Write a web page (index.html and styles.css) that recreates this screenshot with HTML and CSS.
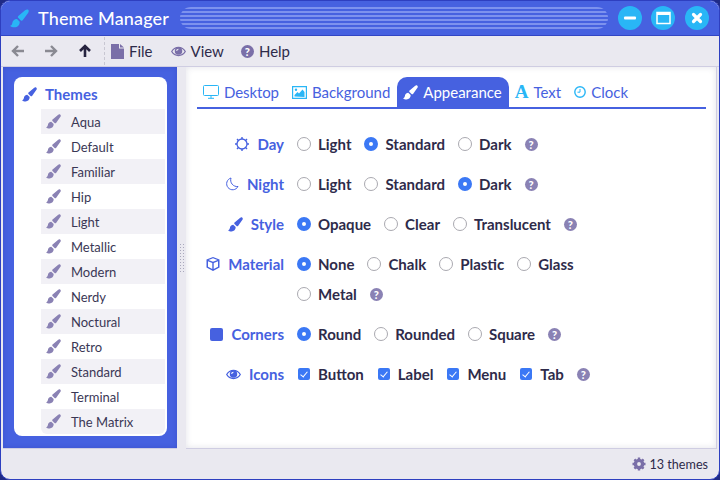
FILE: index.html
```html
<!DOCTYPE html>
<html lang="en">
<head>
    <meta charset="UTF-8">
    <title>Theme Manager</title>
    <link rel="stylesheet" href="styles.css">
</head>
<body>
    <svg class="defs" width="0" height="0">
        <symbol id="brush" viewBox="0 0 16 16"><path d="M15.300.7c.8.7.5 1.700-.1 2.600L10.700 9.500C10.200 10 9.600 10 9.100 9.600L6.900 7.400C6.500 6.900 6.500 6.400 7 5.900L12.700 1.100c1-.8 1.900-1 2.600-.4z"/><path d="M5.900 8.400L8.200 10.700C8.300 13.500 6.300 15.400 3.800 15.400 2.200 15.400.8 14.800 0 14 1.200 13.800 1.700 13 1.900 11.900 2.200 9.800 3.800 8.300 5.900 8.400z"/></symbol>
        <symbol id="eye" viewBox="0 0 16 16"><path fill-rule="evenodd" d="M0 8c1.700-3 4.700-5 8-5s6.300 2 8 5c-1.700 3-4.700 5-8 5S1.700 11 0 8zm1.500 0C3 10.300 5.400 11.800 8 11.800s5-1.500 6.500-3.800C13.600 6.600 12.400 5.500 11 4.900c.6.700 1 1.600 1 2.600a4 4 0 0 1-8 0c0-1 .4-1.900 1-2.600C3.600 5.500 2.400 6.600 1.500 8zM8 5a2.500 2.500 0 0 0-2.500 2.500h1.200C6.700 6.800 7.300 6.200 8 6.200z"/></symbol>
    </svg>

    <div class="window">
        <div class="titlebar">
            <svg class="title-icon"><use href="#brush"/></svg>
            <span class="title">Theme Manager</span>
            <div class="stripes"></div>
            <div class="winbtn">
                <svg viewBox="0 0 24 24"><rect x="6" y="10.500" width="12" height="3" rx="1" fill="#fff"/></svg>
            </div>
            <div class="winbtn">
                <svg viewBox="0 0 24 24"><rect x="6" y="6.500" width="13" height="11" fill="none" stroke="#fff" stroke-width="1.500"/><rect x="6" y="6.500" width="13" height="2.500" fill="#fff"/></svg>
            </div>
            <div class="winbtn">
                <svg viewBox="0 0 24 24"><path d="M8.500 8.500l7 7M15.500 8.500l-7 7" stroke="#fff" stroke-width="3.200" stroke-linecap="round"/></svg>
            </div>
        </div>

        <div class="toolbar">
            <svg class="arrow arrow-off" viewBox="0 0 14 14"><path d="M7 2L2 7l5 5M2.500 7H13" fill="none" stroke="currentColor" stroke-width="2.400"/></svg>
            <svg class="arrow arrow-off" viewBox="0 0 14 14"><path d="M7 2l5 5-5 5M11.500 7H1" fill="none" stroke="currentColor" stroke-width="2.400"/></svg>
            <svg class="arrow arrow-on" viewBox="0 0 14 14"><path d="M2 7l5-5 5 5M7 2.500V13" fill="none" stroke="currentColor" stroke-width="2.600"/></svg>
            <div class="tool-sep"></div>
            <div class="tool tool-file">
                <svg width="13" height="16" viewBox="0 0 13 16"><path d="M0 1h8v4.500h5V16H0zM9 1l4 3.500H9z"/></svg>
                <span>File</span>
            </div>
            <div class="tool tool-view">
                <svg width="15" height="15"><use href="#eye"/></svg>
                <span>View</span>
            </div>
            <div class="tool">
                <span class="help help-tool">?</span>
                <span>Help</span>
            </div>
        </div>

        <div class="main">
            <div class="side">
                <div class="side-card">
                    <div class="side-head">
                        <svg width="15" height="15"><use href="#brush"/></svg>
                        <span>Themes</span>
                    </div>
                    <ul class="theme-list">
                        <li><svg width="15" height="15"><use href="#brush"/></svg>Aqua</li>
                        <li><svg width="15" height="15"><use href="#brush"/></svg>Default</li>
                        <li><svg width="15" height="15"><use href="#brush"/></svg>Familiar</li>
                        <li><svg width="15" height="15"><use href="#brush"/></svg>Hip</li>
                        <li><svg width="15" height="15"><use href="#brush"/></svg>Light</li>
                        <li><svg width="15" height="15"><use href="#brush"/></svg>Metallic</li>
                        <li><svg width="15" height="15"><use href="#brush"/></svg>Modern</li>
                        <li><svg width="15" height="15"><use href="#brush"/></svg>Nerdy</li>
                        <li><svg width="15" height="15"><use href="#brush"/></svg>Noctural</li>
                        <li><svg width="15" height="15"><use href="#brush"/></svg>Retro</li>
                        <li><svg width="15" height="15"><use href="#brush"/></svg>Standard</li>
                        <li><svg width="15" height="15"><use href="#brush"/></svg>Terminal</li>
                        <li><svg width="15" height="15"><use href="#brush"/></svg>The Matrix</li>
                    </ul>
                </div>
            </div>
            <div class="splitter"><div class="grip"></div></div>
            <div class="content">
                <div class="tabs">
                    <div class="tab tab-first">
                        <svg width="16" height="14" viewBox="0 0 16 14"><path d="M1.500.500h13a1 1 0 0 1 1 1v8a1 1 0 0 1-1 1h-13a1 1 0 0 1-1-1v-8a1 1 0 0 1 1-1zM5 13.300h6M8 10.500v2.800" fill="none" stroke="#29b6f6"/></svg>
                        <span>Desktop</span>
                    </div>
                    <div class="tab">
                        <svg width="15" height="13" viewBox="0 0 15 13"><path fill-rule="evenodd" fill="#29b6f6" d="M0 0h15v13H0zm1.200 1.200v10.600h12.600V1.200z"/><path fill="#29b6f6" d="M2.500 10.500V9l3-3 1.500 1.500 3.500-4 2 2.500v5z"/><circle cx="4" cy="3.800" r="1.200" fill="#29b6f6"/></svg>
                        <span>Background</span>
                    </div>
                    <div class="tab tab-active">
                        <svg width="15" height="15"><use href="#brush"/></svg>
                        <span>Appearance</span>
                    </div>
                    <div class="tab">
                        <span class="tab-a">A</span>
                        <span>Text</span>
                    </div>
                    <div class="tab">
                        <svg width="12" height="12" viewBox="0 0 12 12"><circle cx="6" cy="6" r="5.200" fill="none" stroke="#29b6f6" stroke-width="1.400"/><path d="M6 3v3.200H3.500" fill="none" stroke="#29b6f6"/></svg>
                        <span>Clock</span>
                    </div>
                </div>

                <div class="form">
                    <div class="lbl">
                        <svg width="14" height="14" viewBox="0 0 14 14"><circle cx="7" cy="7" r="5" fill="none" stroke="currentColor" stroke-width="1.300"/><path d="M7 0v2M7 12v2M0 7h2M12 7h2M2 2l1.400 1.400M10.600 10.600L12 12M12 2l-1.400 1.400M3.400 10.600L2 12" stroke="currentColor" stroke-width="1.400"/></svg>
                        <span>Day</span>
                    </div>
                    <div class="opts">
                        <span class="opt"><i class="radio"></i>Light</span>
                        <span class="opt"><i class="radio on"></i>Standard</span>
                        <span class="opt"><i class="radio"></i>Dark</span>
                        <span class="help">?</span>
                    </div>

                    <div class="lbl">
                        <svg width="14" height="14" viewBox="0 0 14 14"><path d="M6 1a6 6 0 1 0 7 8.500A6.500 6.500 0 0 1 6 1z" fill="none" stroke="currentColor"/></svg>
                        <span>Night</span>
                    </div>
                    <div class="opts">
                        <span class="opt"><i class="radio"></i>Light</span>
                        <span class="opt"><i class="radio"></i>Standard</span>
                        <span class="opt"><i class="radio on"></i>Dark</span>
                        <span class="help">?</span>
                    </div>

                    <div class="lbl">
                        <svg width="15" height="15"><use href="#brush"/></svg>
                        <span>Style</span>
                    </div>
                    <div class="opts">
                        <span class="opt"><i class="radio on"></i>Opaque</span>
                        <span class="opt"><i class="radio"></i>Clear</span>
                        <span class="opt"><i class="radio"></i>Translucent</span>
                        <span class="help">?</span>
                    </div>

                    <div class="lbl">
                        <svg width="14" height="14" viewBox="0 0 14 14"><path fill-rule="evenodd" d="M7 0l6.500 2.500v8L7 14 .5 10.500v-8zM2.500 3L7 4.800 11.500 3 7 1.300zM2 4.200v5.500l4.300 2.300V6zm5.700 1.800v6L12 9.700V4.200z"/></svg>
                        <span>Material</span>
                    </div>
                    <div class="opts">
                        <span class="opt"><i class="radio on"></i>None</span>
                        <span class="opt"><i class="radio"></i>Chalk</span>
                        <span class="opt"><i class="radio"></i>Plastic</span>
                        <span class="opt"><i class="radio"></i>Glass</span>
                        <span class="opt"><i class="radio"></i>Metal</span>
                        <span class="help">?</span>
                    </div>

                    <div class="lbl">
                        <span class="square"></span>
                        <span>Corners</span>
                    </div>
                    <div class="opts">
                        <span class="opt"><i class="radio on"></i>Round</span>
                        <span class="opt"><i class="radio"></i>Rounded</span>
                        <span class="opt"><i class="radio"></i>Square</span>
                        <span class="help">?</span>
                    </div>

                    <div class="lbl">
                        <svg width="15" height="15"><use href="#eye"/></svg>
                        <span>Icons</span>
                    </div>
                    <div class="opts">
                        <span class="opt"><i class="check"></i>Button</span>
                        <span class="opt"><i class="check"></i>Label</span>
                        <span class="opt"><i class="check"></i>Menu</span>
                        <span class="opt"><i class="check"></i>Tab</span>
                        <span class="help">?</span>
                    </div>
                </div>
            </div>
        </div>

        <div class="statusbar">
            <svg width="14" height="14" viewBox="0 0 14 14"><circle cx="7" cy="7" r="3.600" fill="none" stroke="#7a6fa8" stroke-width="3.400"/><path d="M7 .5v13M.5 7h13M2.400 2.400l9.200 9.200M11.600 2.400l-9.200 9.200" stroke="#7a6fa8" stroke-width="2.400" stroke-dasharray="2.600 7.800"/></svg>
            <span>13 themes</span>
        </div>
    </div>
</body>
</html>
```

FILE: styles.css
```css
html, body {
    margin: 0;
    height: 100%;
    background: #1f2a86;
}
body {
    font-family: "Lato", sans-serif;
    color: #2e2b4a;
}
.defs {
    display: block;
    height: 0;
}
.window {
    box-sizing: border-box;
    width: 720px;
    height: 480px;
    display: flex;
    flex-direction: column;
    background: #eae9f0;
    border: 1px solid #2e3fc0;
    border-radius: 10px;
    overflow: hidden;
}

/* title bar */
.titlebar {
    height: 34px;
    flex: none;
    display: flex;
    align-items: center;
    padding-left: 9px;
    background: #4661e0;
    border-bottom: 1px solid #3246c4;
}
.title-icon {
    width: 19px;
    height: 19px;
    fill: #29b6f6;
}
.title {
    margin-left: 9px;
    font-size: 18px;
    letter-spacing: 0.15px;
    font-weight: 500;
    color: #fff;
    width: 142px;
    white-space: nowrap;
}
.stripes {
    width: 428px;
    height: 22px;
    border-radius: 11px;
    background: repeating-linear-gradient(#7d92ee 0 2px, #4661e0 2px 4px);
}
.winbtn {
    width: 24px;
    height: 24px;
    margin-left: 9px;
    border-radius: 50%;
    background: #29b6f6;
}
.stripes + .winbtn,
.winbtn + .winbtn + .winbtn {
    margin-left: 10px;
}
.winbtn svg {
    display: block;
}

/* toolbar */
.toolbar {
    height: 30px;
    flex: none;
    display: flex;
    align-items: center;
    font-size: 15px;
    border-bottom: 1px solid #cfcde2;
    padding-left: 10px;
}
.arrow {
    width: 14px;
    height: 14px;
    margin-right: 19px;
}
.arrow-off {
    color: #8a8a92;
}
.arrow-on {
    color: #26233f;
    margin: 0 12px 0 1px;
}
.tool-sep {
    height: 28px;
    border-left: 1px dashed #c8c7d2;
    margin-right: 6px;
}
.tool {
    display: flex;
    align-items: center;
    gap: 5px;
}
.tool svg {
    fill: #7a6fa8;
}
.tool-file {
    margin-right: 18px;
}
.tool-view {
    margin-right: 17px;
}

/* help bubble */
.help {
    display: inline-block;
    width: 13px;
    height: 13px;
    line-height: 13px;
    border-radius: 50%;
    background: #8a82b4;
    color: #fff;
    font-size: 11px;
    font-weight: 900;
    text-align: center;
}
.help-tool {
    background: #7a6fa8;
}

/* main area */
.main {
    flex: 1;
    display: flex;
    min-height: 0;
    padding-left: 2px;
}
.side {
    width: 174px;
    box-sizing: border-box;
    padding: 10px 10px 12px 11px;
    background: #4661e0;
    border-bottom: 1px solid #cfcde2;
    box-shadow: inset 0 0 4px rgba(30, 40, 140, 0.25);
}
.side-card {
    height: 100%;
    box-sizing: border-box;
    padding-top: 7px;
    background: #fff;
    border-radius: 8px;
}
.side-head {
    display: flex;
    align-items: center;
    gap: 8px;
    height: 20px;
    margin-bottom: 5px;
    padding-left: 8px;
    font-size: 15px;
    font-weight: 700;
    color: #4661e0;
}
.side-head svg {
    fill: #4661e0;
}
.theme-list {
    list-style: none;
    margin: 0 2px 0 27px;
    padding: 0;
}
.theme-list li {
    display: flex;
    align-items: center;
    gap: 10px;
    height: 25px;
    padding-left: 5px;
    font-size: 13px;
    color: #3a3755;
}
.theme-list li:nth-child(odd) {
    background: #f2f1f6;
}
.theme-list li:last-child {
    border-radius: 0 0 6px 6px;
}
.theme-list svg {
    fill: #8a82b4;
}
.splitter {
    width: 9px;
    flex: none;
    display: flex;
    align-items: center;
    justify-content: center;
}
.grip {
    width: 6px;
    height: 30px;
    background: radial-gradient(circle, #a9a8bc 0.7px, transparent 1px) 0 0 / 3px 3px;
}
.content {
    flex: 1;
    box-sizing: border-box;
    padding: 10px 10px 0 11px;
    background: #fff;
    border: 1px solid #cfcde2;
    border-width: 0 1px 1px 0;
    margin-right: 2px;
    box-shadow: inset 0 0 6px rgba(60, 60, 100, 0.14);
}

/* tabs */
.tabs {
    display: flex;
    height: 30px;
    border-bottom: 2px solid #4661e0;
    font-size: 15px;
    color: #4661e0;
}
.tab {
    display: flex;
    align-items: center;
    gap: 5px;
    padding: 0 7px 0 6px;
}
.tab-first span {
    letter-spacing: -0.1px;
}
.tab-active {
    background: #4661e0;
    color: #fff;
    border-radius: 10px 10px 0 0;
    fill: #fff;
}
.tab-a {
    font-family: "Liberation Serif", serif;
    font-size: 19px;
    font-weight: 700;
    color: #29b6f6;
}

/* form */
.form {
    display: grid;
    grid-template-columns: 87px 300px;
    column-gap: 13px;
    row-gap: 10px;
    margin-top: 20px;
    font-size: 15px;
    font-weight: 700;
}
.lbl {
    display: flex;
    justify-content: flex-end;
    align-items: center;
    gap: 8px;
    height: 30px;
    color: #4661e0;
    fill: #4661e0;
    white-space: nowrap;
}
.square {
    width: 13px;
    height: 13px;
    border-radius: 2px;
    background: #4661e0;
}
.opts {
    display: flex;
    flex-wrap: wrap;
    align-items: center;
    column-gap: 13px;
}
.opt {
    display: inline-flex;
    align-items: center;
    gap: 7px;
    height: 30px;
}
.radio {
    box-sizing: border-box;
    width: 14px;
    height: 14px;
    border-radius: 50%;
    border: 1px solid #aaa9b0;
    background: #fff;
}
.radio.on {
    border: 5px solid #3b78f5;
}
.check {
    width: 12px;
    height: 12px;
    margin: 0 1px;
    border-radius: 2px;
    background: #3b78f5;
    position: relative;
}
.check::after {
    content: "";
    position: absolute;
    left: 4px;
    top: 2px;
    width: 3px;
    height: 6px;
    border: solid #fff;
    border-width: 0 1.5px 1.5px 0;
    transform: rotate(40deg);
}

/* status bar */
.statusbar {
    height: 30px;
    flex: none;
    display: flex;
    align-items: center;
    justify-content: flex-end;
    gap: 4px;
    padding-right: 11px;
    font-size: 12.600px;
}
```
